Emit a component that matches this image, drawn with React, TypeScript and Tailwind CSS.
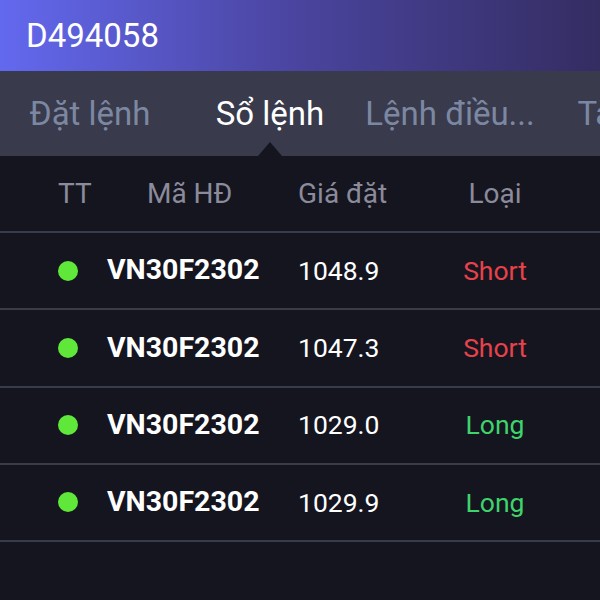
import React from "react";

const rows = [
  { code: "VN30F2302", price: "1048.9", type: "Short" },
  { code: "VN30F2302", price: "1047.3", type: "Short" },
  { code: "VN30F2302", price: "1029.0", type: "Long" },
  { code: "VN30F2302", price: "1029.9", type: "Long" },
];

export default function App() {
  return (
    <div
      className="w-[600px] h-[600px] overflow-hidden bg-[#15151f] flex flex-col"
      style={{ fontFamily: "Roboto, 'Noto Sans', sans-serif" }}
    >
      <div className="h-[71px] shrink-0 flex items-center pl-[26px] bg-gradient-to-r from-[#6369ef] via-[#4a449e] to-[#342d62]">
        <span className="text-[33px] text-white leading-none">D494058</span>
      </div>
      <div className="h-[85px] shrink-0 bg-[#393a4c] flex relative">
        {["Đặt lệnh", "Sổ lệnh", "Lệnh điều...", "Tài sản"].map((t, i) => (
          <div
            key={t}
            className={`w-[180px] shrink-0 flex items-center justify-center text-[33px] whitespace-nowrap ${
              i === 1 ? "text-white relative" : "text-[#7c88a2]"
            }`}
          >
            {t}
            {i === 1 && (
              <div className="absolute bottom-0 left-1/2 -translate-x-1/2 w-0 h-0 border-l-[12px] border-r-[12px] border-b-[14px] border-l-transparent border-r-transparent border-b-[#15151f]" />
            )}
          </div>
        ))}
      </div>
      <div className="h-[77px] shrink-0 flex items-center border-b-2 border-[#383b48] text-[28px] text-[#8b8b9b]">
        <div className="w-[107px] pl-[58px]">TT</div>
        <div className="w-[191px] pl-[40px]">Mã HĐ</div>
        <div className="w-[130px]">Giá đặt</div>
        <div className="w-[134px] text-center">Loại</div>
      </div>
      {rows.map((r, i) => (
        <div
          key={i}
          className="h-[77.25px] shrink-0 flex items-center border-b-2 border-[#383b48]"
        >
          <div className="w-[107px] pl-[58px] flex items-center">
            <span className="block w-[20px] h-[20px] rounded-full bg-[#5fe83a]" />
          </div>
          <div className="w-[191px] text-[28.5px] font-bold text-white">{r.code}</div>
          <div className="w-[130px] text-[26.5px] text-white">{r.price}</div>
          <div
            className={`w-[134px] text-center text-[26.5px] ${
              r.type === "Short" ? "text-[#e6424b]" : "text-[#3fd36c]"
            }`}
          >
            {r.type}
          </div>
        </div>
      ))}
    </div>
  );
}
